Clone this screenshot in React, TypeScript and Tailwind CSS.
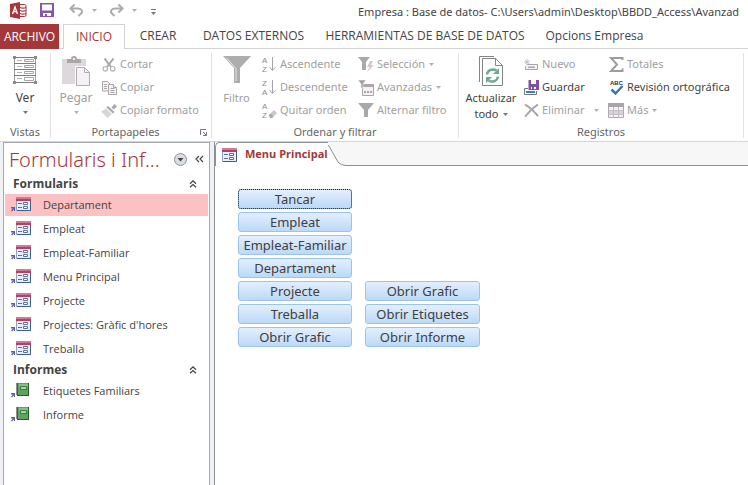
import React from "react";

function Caret({ className = "text-[#777777]" }: { className?: string }) {
  return (
    <svg width="5" height="3" viewBox="0 0 5 3" className={`shrink-0 ${className}`} aria-hidden="true">
      <path d="M0 0h5L2.5 3z" fill="currentColor" />
    </svg>
  );
}

/* ---------- icons ---------- */

const AccessLogo = () => (
  <svg width="17" height="17" viewBox="0 0 17 17" aria-hidden="true">
    <path d="M9 2.5h5.500q1.500 0 1.500 1.500v9q0 1.500-1.500 1.500H9z" fill="#fff" stroke="#a4373a" />
    <path d="M10 5.500q3 1.300 6 0M10 8.500q3 1.300 6 0M10 11.500q3 1.300 6 0" stroke="#a4373a" fill="none" strokeWidth="1.300" />
    <path d="M0 2l10-2v17L0 15z" fill="#a4373a" />
    <path d="M2.500 12L5 5l2.500 7M3.500 9.700h3" stroke="#fff" strokeWidth="1.300" fill="none" />
  </svg>
);

const SaveIcon = () => (
  <svg width="14" height="14" viewBox="0 0 14 14" aria-hidden="true">
    <path d="M0 0h14v14H0z" fill="#8855ab" />
    <path d="M2 1.500h10v6H2zM3 10h8v3H3z" fill="#fff" />
    <path d="M5 11h2v2H5z" fill="#8855ab" />
  </svg>
);

const UndoIcon = ({ flip = false }: { flip?: boolean }) => (
  <svg width="15" height="13" viewBox="0 0 15 13" className={flip ? "-scale-x-100" : ""} aria-hidden="true">
    <path d="M2 4.500h6.500c4 0 5.500 2.500 4 4.500l-3 3" fill="none" stroke="#ababab" strokeWidth="2" />
    <path d="M5.500 0.500L1.500 4.500l4 4" fill="none" stroke="#ababab" strokeWidth="2" />
  </svg>
);

const ViewIcon = () => (
  <svg width="26" height="28" viewBox="0 0 26 28" fill="none" stroke="#7c7c7c" aria-hidden="true">
    <path d="M2.500 0v28M23.500 0v28" stroke="#9a9a9a" />
    <path d="M1 1.500h24M1 26.500h24" />
    <path d="M2 7.500h22M2 13.500h22M2 19.500h22" />
    <path d="M12.500 3.500h9v2h-9zM12.500 9.500h9v2h-9zM12.500 15.500h9v2h-9zM12.500 21.500h9v3h-9z" stroke="#a5a5a5" />
    <path d="M5 4.500h5M5 10.500h5M5 16.500h5M5 22.500h5" stroke="#b5b5b5" />
    <path d="M1 0h3v3H1zM22 0h3v3h-3zM1 25h3v3H1zM22 25h3v3h-3z" fill="#8a8a8a" stroke="none" />
  </svg>
);

const PasteIcon = () => (
  <svg width="28" height="30" viewBox="0 0 28 30" aria-hidden="true">
    <path d="M0 3h24v25H0z" fill="#dcd8dc" />
    <path d="M5 7V3h4q0-3 3-3t3 3h4v4z" fill="#aaa6aa" />
    <path d="M11 2h2v2h-2z" fill="#eee" />
    <path d="M13 10h15v20H13z" fill="#fff" />
    <path d="M14.500 11.500h8l5 5v13h-13z" fill="#f6f1f6" stroke="#b0acb0" />
    <path d="M22.500 11.500v5h5" fill="none" stroke="#b0acb0" />
  </svg>
);

const CutIcon = () => (
  <svg width="14" height="14" viewBox="0 0 14 14" fill="none" aria-hidden="true">
    <path d="M2.500 0.500L9 9M11.500 0.500L5 9" stroke="#a6a6a6" strokeWidth="2" />
    <circle cx="3.300" cy="10.800" r="2.300" stroke="#b5b5b5" strokeWidth="1.200" />
    <circle cx="10.700" cy="10.800" r="2.300" stroke="#b5b5b5" strokeWidth="1.200" />
  </svg>
);

const CopyIcon = () => (
  <svg width="15" height="14" viewBox="0 0 15 14" fill="#f6f1f6" stroke="#a9a5a9" aria-hidden="true">
    <path d="M0.500 0.500h5l2.500 2.500v7h-7.500z" />
    <path d="M2 3.500h3M2 5.500h3M2 7.500h3" />
    <path d="M6.500 3.500h5l3 3v7h-8z" />
    <path d="M8.500 7.500h4M8.500 9.500h4M8.500 11.500h4M11.500 3.500v3h3" />
  </svg>
);

const BrushIcon = () => (
  <svg width="16" height="14" viewBox="0 0 16 14" aria-hidden="true">
    <path d="M13.500 0L16 2.500l-3.500 3-2-2z" fill="#a9a5a9" />
    <path d="M7 2l6.500 6-1.500 1.500L5.500 3.500z" fill="#a9a5a9" />
    <path d="M5 4.500l6 5.500-4.500 4L0 7.500z" fill="#dbd6db" />
  </svg>
);

const FunnelBig = () => (
  <svg width="28" height="28" viewBox="0 0 28 28" aria-hidden="true">
    <path d="M0 0h28L17 12v15h-6V12z" fill="#adadad" />
    <path d="M3.500 2L13 12.500V25" fill="none" stroke="#e9e9e9" />
  </svg>
);

const AzIcon = ({ top, bottom, eraser = false }: { top: string; bottom: string; eraser?: boolean }) => (
  <svg width="15" height="19" viewBox="0 0 15 19" className="overflow-visible" aria-hidden="true">
    <text x="0" y="8" fontSize="8" fontFamily="Liberation Sans, sans-serif" fill="#8c8c8c">{top}</text>
    <text x="0" y="17" fontSize="8" fontFamily="Liberation Sans, sans-serif" fill="#8c8c8c">{bottom}</text>
    {eraser ? (
      <>
        <path d="M7 14l5-5 3 3-5 5H8z" fill="#c9c5c9" />
        <path d="M7 14l1.500-1.500 3 3L10 17H8z" fill="#aaa" />
      </>
    ) : (
      <path d="M10.500 2v13M7.500 12l3 3.500 3-3.500" fill="none" stroke="#a6a6a6" />
    )}
  </svg>
);

const FunnelSmall = () => (
  <svg width="16" height="15" viewBox="0 0 16 15" aria-hidden="true">
    <path d="M0 0h16l-6 7v7H6V7z" fill="#a9a9a9" />
  </svg>
);

const SelectionIcon = () => (
  <svg width="16" height="15" viewBox="0 0 16 15" aria-hidden="true">
    <path d="M0 0h12L8 5v8H4V5z" fill="#a9a9a9" />
    <path d="M12 4h3l-2 4h3l-7 7 2.500-5H9z" fill="#cfcbcf" />
  </svg>
);

const AdvancedIcon = () => (
  <svg width="16" height="16" viewBox="0 0 16 16" aria-hidden="true">
    <path d="M4.500 4.500h11v11h-11z" fill="#f6f1f6" stroke="#a9a5a9" />
    <path d="M4 4h12v3H4z" fill="#a9a5a9" />
    <path d="M0 0h8L5 4v4H3V4z" fill="#a0a0a0" stroke="#fff" strokeWidth="0.500" />
    <path d="M6 11h2v2H6zM9 11h2v2H9zM12 11h2v2h-2z" fill="#a9a5a9" />
  </svg>
);

const RefreshIcon = () => (
  <svg width="24" height="30" viewBox="0 0 24 30" fill="none" aria-hidden="true">
    <path d="M0.500 26V0.500H15" stroke="#848484" />
    <path d="M3.500 2.500h13l7 7v20h-20z" fill="#fff" stroke="#848484" />
    <path d="M16.500 2.500v7h7" stroke="#848484" />
    <path d="M8 18.500a6 5.500 0 0 1 9.500-4M19 20.500a6 5.500 0 0 1-9.500 4" stroke="#6fa891" strokeWidth="2.500" />
    <path d="M20 12v6h-6zM7 27v-6h6z" fill="#6fa891" />
  </svg>
);

const NewIcon = () => (
  <svg width="14" height="12" viewBox="0 0 14 12" aria-hidden="true">
    <path d="M3 5.500h10.500v5H1.500V7" fill="#f6f1f6" stroke="#a9a5a9" />
    <path d="M4 7.500h7v1.500H4z" fill="#aaa" />
    <path d="M3 0v6M0 3h6M1 1l4 4M5 1L1 5" stroke="#bbb" strokeWidth="0.800" />
  </svg>
);

const SaveRecordIcon = () => (
  <svg width="15" height="15" viewBox="0 0 15 15" aria-hidden="true">
    <path d="M4 8.500H0.500v6h12V11" fill="#fff" stroke="#777" />
    <path d="M2 11h9v2H2z" fill="#3f7fbf" />
    <path d="M4.500 0H15v10H4.500z" fill="#8050a5" />
    <path d="M7 0h5v4H7zM7 7h5v2H7z" fill="#fff" />
    <path d="M8 7h2v2H8z" fill="#8050a5" />
  </svg>
);

const DeleteIcon = () => (
  <svg width="15" height="13" viewBox="0 0 15 13" aria-hidden="true">
    <path d="M1 0.500Q7 4 14 12M14 0.500Q7 5 1 12.500" fill="none" stroke="#a6a6a6" strokeWidth="2" />
  </svg>
);

const SigmaIcon = () => (
  <svg width="15" height="15" viewBox="0 0 15 15" aria-hidden="true">
    <path d="M13.500 3V1H2l6 6.500L2 14h11.500v-2.500" fill="none" stroke="#9d9d9d" strokeWidth="2" />
  </svg>
);

const SpellIcon = () => (
  <svg width="15" height="17" viewBox="0 0 15 17" className="overflow-visible" aria-hidden="true">
    <text x="1" y="6" fontSize="6" fontWeight="700" fontFamily="Liberation Sans, sans-serif" fill="#333">ABC</text>
    <path d="M2.500 10.500l4 4L13.500 7" fill="none" stroke="#3f76b5" strokeWidth="2.500" />
  </svg>
);

const MoreIcon = () => (
  <svg width="16" height="15" viewBox="0 0 16 15" aria-hidden="true">
    <path d="M0.500 0.500h15v14H0.500z" fill="#f6f1f6" stroke="#a9a5a9" />
    <path d="M0 0h16v4H0z" fill="#a9a5a9" />
    <path d="M1 8h14v3H1z" fill="#d8d2d8" />
    <path d="M5.500 4v11M10.500 4v11M0 7.500h16M0 11.500h16" stroke="#c3bec3" />
  </svg>
);

const LinkArrow = () => <path d="M0 9h4v4H3V11.500L1 13.500l-1-1 2-2H0z" fill="#6060a8" />;

const FormGlyph = () => (
  <g>
    <path d="M0.500 0.500h14v13H0.500z" fill="#e9effa" stroke="#8fa1c0" />
    <path d="M0 0h15v4H0z" fill="#b23f68" />
    <path d="M0 0h15v2H0z" fill="#cf7b97" />
    <path d="M14.500 4v9.500H1" stroke="#3d5f8f" fill="none" />
    <path d="M2 6.500h4M2 10.500h4" stroke="#5a6f92" />
    <path d="M7.500 5.500h4v2h-4zM7.500 9.500h4v2h-4z" fill="#fff" stroke="#5a6f92" />
  </g>
);

const FormIcon = () => (
  <svg width="15" height="14" viewBox="0 0 15 14" aria-hidden="true">
    <FormGlyph />
  </svg>
);

const FormLinkIcon = () => (
  <svg width="20" height="16" viewBox="0 0 20 16" className="shrink-0" aria-hidden="true">
    <g transform="translate(5 0)"><FormGlyph /></g>
    <g transform="translate(0 1)"><LinkArrow /></g>
  </svg>
);

const ReportLinkIcon = () => (
  <svg width="20" height="16" viewBox="0 0 20 16" className="shrink-0" aria-hidden="true">
    <path d="M6 0h12v13H6z" fill="#5da45f" />
    <path d="M8 1h9v3H8z" fill="#86c184" />
    <path d="M17.500 0v12.500H6" stroke="#245a2c" fill="none" />
    <path d="M9.500 3.500h6v3h-6z" fill="#a9d5a5" stroke="#3b7d40" />
    <path d="M6 0.500v12" stroke="#222" strokeWidth="2" strokeDasharray="1 1" />
    <g transform="translate(0 1)"><LinkArrow /></g>
  </svg>
);

const DoubleChevronUp = () => (
  <svg width="8" height="8" viewBox="0 0 8 8" fill="none" stroke="#444" strokeWidth="1.200" aria-hidden="true">
    <path d="M1 3.700L4 0.900l3 2.800M1 7.300L4 4.500l3 2.800" />
  </svg>
);

/* ---------- ribbon ---------- */

type SmallProps = { icon: React.ReactNode; label: string; enabled?: boolean; caret?: boolean; caretGap?: string };

function SmallButton({ icon, label, enabled = false, caret = false, caretGap = "gap-1" }: SmallProps) {
  return (
    <button
      type="button"
      disabled={!enabled}
      className={`flex h-[23px] items-center gap-[3px] whitespace-nowrap ${enabled ? "text-[#444444]" : "text-[#a0a0a0]"}`}
    >
      <span className="flex w-4 shrink-0 justify-center">{icon}</span>
      <span className={`flex items-center ${caretGap}`}>
        {label}
        {caret && <Caret className="text-[#b0b0b0]" />}
      </span>
    </button>
  );
}

function BigButton({ icon, children, width, enabled = false }: { icon: React.ReactNode; children: React.ReactNode; width: string; enabled?: boolean }) {
  return (
    <button
      type="button"
      disabled={!enabled}
      className={`flex shrink-0 flex-col items-center self-start pt-[3px] leading-4 ${width} ${enabled ? "text-[#444444]" : "text-[#a0a0a0]"}`}
    >
      <span className="flex h-[34px] items-start justify-center">{icon}</span>
      {children}
    </button>
  );
}

function Group({ label, children, className, launcher = false }: { label: string; children: React.ReactNode; className: string; launcher?: boolean }) {
  return (
    <section aria-label={label} className={`flex shrink-0 flex-col border-r border-[#e1e1e1] ${className}`}>
      <div className="flex h-[73px]">{children}</div>
      <div className="flex h-3 items-center leading-3 text-[#666666]">
        <span className="flex-1 text-center">{label}</span>
        {launcher && (
          <button type="button" aria-label="Portapapeles: opciones" className="mr-1">
            <svg width="7" height="7" viewBox="0 0 7 7" fill="none" stroke="#777" aria-hidden="true">
              <path d="M0.500 6V0.500H6M3 3l3 3M6.500 3v3.500H3" />
            </svg>
          </button>
        )}
      </div>
    </section>
  );
}

function Ribbon() {
  return (
    <div className="flex h-[93px] overflow-hidden border-b border-[#d4d4d4] pt-1 pb-[3px] font-['Noto_Sans',sans-serif] text-[11px]">
      <Group label="Vistas" className="w-[51px]">
        <BigButton enabled width="w-[50px]" icon={<ViewIcon />}>
          <span className="text-[12px]">Ver</span>
          <span className="flex h-3 items-center"><Caret /></span>
        </BigButton>
      </Group>
      <Group label="Portapapeles" className="w-[161px]" launcher>
        <BigButton width="w-[50px]" icon={<PasteIcon />}>
          <span className="text-[12px]">Pegar</span>
          <span className="flex h-3 items-center"><Caret className="text-[#b0b0b0]" /></span>
        </BigButton>
        <div>
          <SmallButton icon={<CutIcon />} label="Cortar" />
          <SmallButton icon={<CopyIcon />} label="Copiar" />
          <SmallButton icon={<BrushIcon />} label="Copiar formato" />
        </div>
      </Group>
      <Group label="Ordenar y filtrar" className="w-[247px]">
        <BigButton width="w-[49px]" icon={<FunnelBig />}>Filtro</BigButton>
        <div className="w-[97px]">
          <SmallButton icon={<AzIcon top="A" bottom="Z" />} label="Ascendente" />
          <SmallButton icon={<AzIcon top="Z" bottom="A" />} label="Descendente" />
          <SmallButton icon={<AzIcon top="A" bottom="Z" eraser />} label="Quitar orden" />
        </div>
        <div>
          <SmallButton icon={<SelectionIcon />} label="Selección" caret />
          <SmallButton icon={<AdvancedIcon />} label="Avanzadas" caret />
          <SmallButton icon={<FunnelSmall />} label="Alternar filtro" />
        </div>
      </Group>
      <Group label="Registros" className="w-[285px]">
        <BigButton enabled width="w-[64px]" icon={<RefreshIcon />}>
          <span>Actualizar</span>
          <span className="flex items-center gap-1">todo <Caret /></span>
        </BigButton>
        <div className="w-[85px]">
          <SmallButton icon={<NewIcon />} label="Nuevo" />
          <SmallButton icon={<SaveRecordIcon />} label="Guardar" enabled />
          <SmallButton icon={<DeleteIcon />} label="Eliminar" caret caretGap="gap-[10px]" />
        </div>
        <div>
          <SmallButton icon={<SigmaIcon />} label="Totales" />
          <SmallButton icon={<SpellIcon />} label="Revisión ortográfica" enabled />
          <SmallButton icon={<MoreIcon />} label="Más" caret />
        </div>
      </Group>
    </div>
  );
}

/* ---------- header ---------- */

function TitleBar() {
  return (
    <header className="flex h-6 items-center overflow-hidden pl-[10px]">
      <div className="flex w-[348px] shrink-0 items-center pb-1">
        <AccessLogo />
        <button type="button" aria-label="Guardar" className="ml-[13px]"><SaveIcon /></button>
        <button type="button" aria-label="Deshacer" className="ml-[15px] flex items-center gap-2">
          <UndoIcon /><Caret className="text-[#b0b0b0]" />
        </button>
        <button type="button" aria-label="Rehacer" className="ml-3 flex items-center gap-2">
          <UndoIcon flip /><Caret className="text-[#b0b0b0]" />
        </button>
        <button type="button" aria-label="Personalizar barra" className="ml-[14px] flex flex-col items-center gap-[2px] pt-1">
          <span className="h-px w-[5px] bg-[#777777]" />
          <Caret />
        </button>
      </div>
      <h1 className="font-['Noto_Sans',sans-serif] text-[11px] whitespace-nowrap">
        Empresa : Base de datos- C:\Users\admin\Desktop\BBDD_Access\Avanzad
      </h1>
    </header>
  );
}

const tabs = [
  { label: "CREAR", width: "w-[66px]" },
  { label: "DATOS EXTERNOS", width: "w-[125px]" },
  { label: "HERRAMIENTAS DE BASE DE DATOS", width: "w-[218px]" },
  { label: "Opcions Empresa", width: "w-[121px]" },
];

function RibbonTabs() {
  return (
    <nav className="flex h-[25px] overflow-hidden text-[12px] whitespace-nowrap">
      <button type="button" className="w-[59px] shrink-0 bg-[#a4373a] text-white">ARCHIVO</button>
      <span className="w-1 shrink-0 border-b border-[#d4d4d4]" />
      <button type="button" className="w-[62px] shrink-0 border border-b-0 border-[#d4d4d4] text-[#a4373a]">INICIO</button>
      {tabs.map((t) => (
        <button key={t.label} type="button" className={`shrink-0 border-b border-[#d4d4d4] ${t.width}`}>{t.label}</button>
      ))}
      <span className="flex-1 border-b border-[#d4d4d4]" />
    </nav>
  );
}

/* ---------- navigation pane ---------- */

const forms = ["Departament", "Empleat", "Empleat-Familiar", "Menu Principal", "Projecte", "Projectes: Gràfic d'hores", "Treballa"];
const reports = ["Etiquetes Familiars", "Informe"];

function NavSection({ title, items, icon }: { title: string; items: string[]; icon: React.ReactNode }) {
  return (
    <section>
      <button type="button" className="flex h-[18px] w-full items-center justify-between pr-3 pl-[9px] text-[12px] font-bold">
        {title}
        <DoubleChevronUp />
      </button>
      <ul>
        {items.map((item) => (
          <li key={item} className="flex h-6 items-center px-px">
            <button
              type="button"
              className={`flex h-[22px] w-full items-center gap-3 pl-[6px] text-[11px] ${item === "Departament" ? "bg-[#fcc1c3]" : ""}`}
            >
              {icon}
              {item}
            </button>
          </li>
        ))}
      </ul>
    </section>
  );
}

function NavPane() {
  return (
    <aside className="mr-1 ml-[3px] w-[207px] shrink-0 border-x border-t border-[#a5a9b0] bg-white">
      <div className="flex h-8 items-center pr-[5px] pl-[5px]">
        <h2 className="flex-1 pt-[2px] font-['Noto_Sans',sans-serif] text-[20px] font-light whitespace-nowrap text-[#a4373a]">
          Formularis i Inf...
        </h2>
        <button type="button" aria-label="Filtrar objetos" className="mr-2">
          <svg width="13" height="13" viewBox="0 0 13 13" aria-hidden="true">
            <circle cx="6.500" cy="6.500" r="6" fill="#d9dce2" stroke="#8d9199" />
            <path d="M3.500 5h6l-3 3.500z" fill="#444" />
          </svg>
        </button>
        <button type="button" aria-label="Contraer panel">
          <svg width="9" height="8" viewBox="0 0 9 8" fill="none" stroke="#444" strokeWidth="1.200" aria-hidden="true">
            <path d="M4 1L1 4l3 3M8 1L5 4l3 3" />
          </svg>
        </button>
      </div>
      <NavSection title="Formularis" items={forms} icon={<FormLinkIcon />} />
      <NavSection title="Informes" items={reports} icon={<ReportLinkIcon />} />
    </aside>
  );
}

/* ---------- form ---------- */

function FormButton({ label, focused = false }: { label: string; focused?: boolean }) {
  return (
    <button
      type="button"
      className={`h-5 w-full rounded-[3px] border border-[#9dc3ea] bg-linear-to-b from-[#e3effd] to-[#bcd9f8] font-['Noto_Sans',sans-serif] text-[13px] leading-[18px] whitespace-nowrap text-[#404040] ${
        focused ? "outline-1 -outline-offset-1 outline-[#222222] outline-dotted" : ""
      }`}
    >
      {label}
    </button>
  );
}

const leftButtons = ["Tancar", "Empleat", "Empleat-Familiar", "Departament", "Projecte", "Treballa", "Obrir Grafic"];
const rightButtons = ["Obrir Grafic", "Obrir Etiquetes", "Obrir Informe"];

function FormArea() {
  return (
    <main className="flex min-w-0 flex-1 flex-col border-l border-[#8c9097]">
      <div className="flex h-6 bg-[#f7f7f7]">
        <button
          type="button"
          className="flex items-center gap-2 rounded-tl-[5px] border-t border-l border-[#8c9097] bg-white pl-[6px] text-[11px] font-bold whitespace-nowrap text-[#a4373a]"
        >
          <FormIcon />
          Menu Principal
        </button>
        <svg width="18" height="24" viewBox="0 0 18 24" className="shrink-0" aria-hidden="true">
          <path d="M-6 0.500Q-2 0.500 1 4l9 16Q12.500 23.500 18 23.500V24H-6z" fill="#fff" />
          <path d="M-6 0.500Q-2 0.500 1 4l9 16Q12.500 23.500 18 23.500" fill="none" stroke="#8c9097" />
        </svg>
        <div className="flex-1 border-b border-[#8c9097]" />
      </div>
      <div className="flex flex-1 items-start bg-white pt-[23px] pl-[23px]">
        <div className="flex items-end gap-[13px]">
          <div className="flex w-[114px] flex-col gap-[3px]">
            {leftButtons.map((b, i) => <FormButton key={i} label={b} focused={b === "Tancar"} />)}
          </div>
          <div className="flex w-[115px] flex-col gap-[3px]">
            {rightButtons.map((b) => <FormButton key={b} label={b} />)}
          </div>
        </div>
      </div>
    </main>
  );
}

export default function App() {
  return (
    <div className="flex min-h-screen flex-col overflow-hidden bg-white font-['Open_Sans','Noto_Sans',sans-serif] text-[#444444]">
      <TitleBar />
      <RibbonTabs />
      <Ribbon />
      <div className="flex flex-1 bg-[#f0f1f4]">
        <NavPane />
        <FormArea />
      </div>
    </div>
  );
}
